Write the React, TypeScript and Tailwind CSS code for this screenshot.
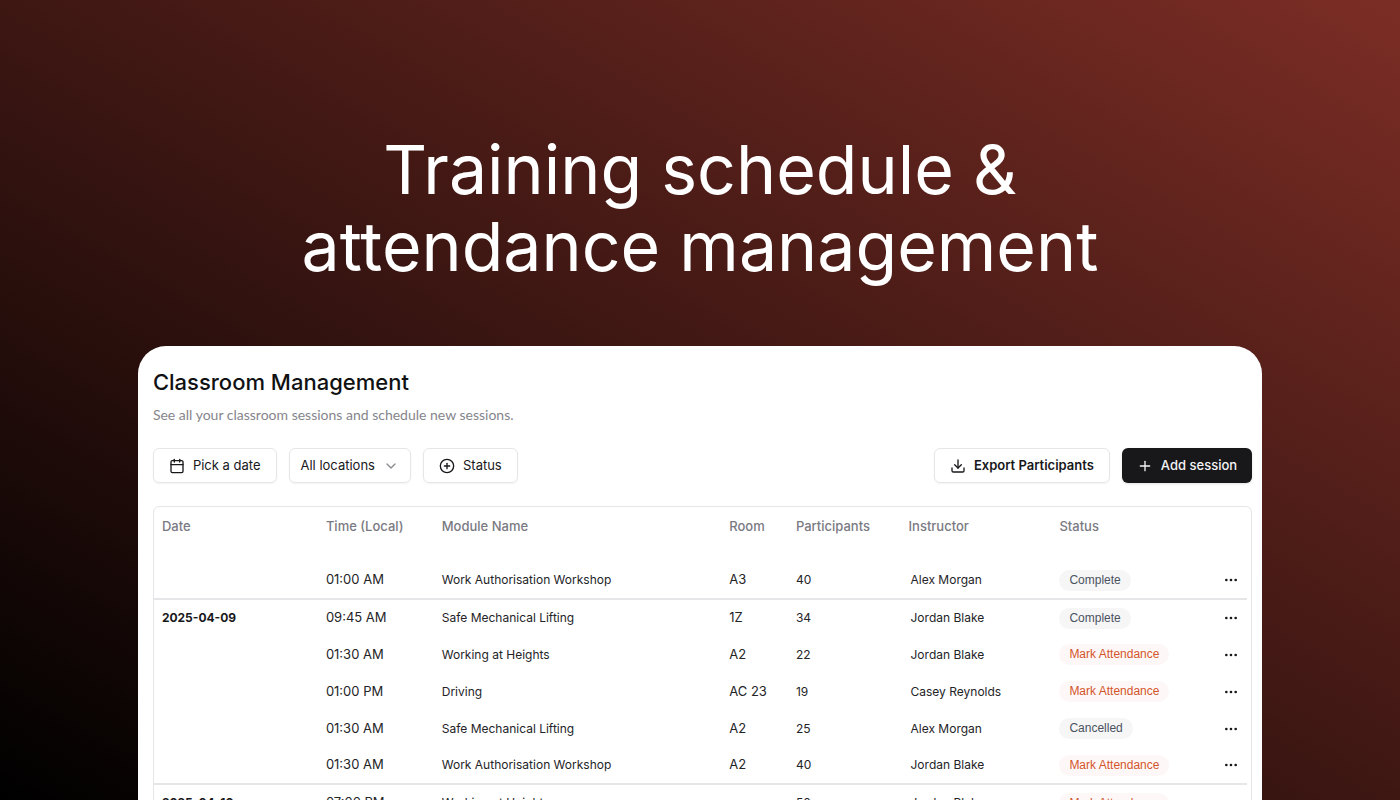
import { Calendar, ChevronDown, CirclePlus, Download, Ellipsis, Plus } from "lucide-react";

const sessions = [
  { date: "", time: "01:00 AM", module: "Work Authorisation Workshop", room: "A3", participants: 40, instructor: "Alex Morgan", status: "Complete", last: true },
  { date: "2025-04-09", time: "09:45 AM", module: "Safe Mechanical Lifting", room: "1Z", participants: 34, instructor: "Jordan Blake", status: "Complete" },
  { date: "", time: "01:30 AM", module: "Working at Heights", room: "A2", participants: 22, instructor: "Jordan Blake", status: "Mark Attendance" },
  { date: "", time: "01:00 PM", module: "Driving", room: "AC 23", participants: 19, instructor: "Casey Reynolds", status: "Mark Attendance" },
  { date: "", time: "01:30 AM", module: "Safe Mechanical Lifting", room: "A2", participants: 25, instructor: "Alex Morgan", status: "Cancelled" },
  { date: "", time: "01:30 AM", module: "Work Authorisation Workshop", room: "A2", participants: 40, instructor: "Jordan Blake", status: "Mark Attendance", last: true },
  { date: "2025-04-10", time: "07:00 PM", module: "Working at Heights", room: "", participants: 50, instructor: "Jordan Blake", status: "Mark Attendance" },
];

const StatusPill = ({ status }: { status: string }) => {
  const color = status === "Mark Attendance" ? "bg-[#fdf8f7] text-[#d4552b]" : "bg-[#f6f6f7] text-[#4b5260]";
  return (
    <span className={`inline-block rounded-full px-[10px] font-['Liberation_Sans',sans-serif] text-[12px] leading-[21px] ${color}`}>
      {status}
    </span>
  );
};

const SessionTable = () => {
  return (
    <div className="mt-[23px] rounded-md border border-[#e6e6e8] pr-1">
      <table className="w-full table-fixed border-collapse text-left text-[13px]">
        <colgroup>
          <col className="w-[15%]" />
          <col className="w-[10.6%]" />
          <col className="w-[26.3%]" />
          <col className="w-[6.1%]" />
          <col className="w-[10.3%]" />
          <col className="w-[13.8%]" />
          <col className="w-[13.9%]" />
          <col />
        </colgroup>
        <thead>
          <tr className="h-[55px] align-top text-[#7a7a82]">
            <th className="px-2 pt-[10px] font-medium">Date</th>
            <th className="px-2 pt-[10px] font-medium">Time (Local)</th>
            <th className="px-2 pt-[10px] font-medium">Module Name</th>
            <th className="px-2 pt-[10px] font-medium">Room</th>
            <th className="px-2 pt-[10px] font-medium">Participants</th>
            <th className="px-2 pt-[10px] font-medium">Instructor</th>
            <th className="px-2 pt-[10px] font-medium">Status</th>
            <th></th>
          </tr>
        </thead>
        <tbody className="text-[#242427]">
          {sessions.map((session, i) => (
            <tr key={i} className={session.last ? "h-[37px] border-b-2 border-[#e6e6e8]" : "h-[37px]"}>
              <td className="px-2 text-[12px] font-bold text-[#18181b]">{session.date}</td>
              <td className="px-2">{session.time}</td>
              <td className="px-2 text-[12px]">{session.module}</td>
              <td className="px-2">{session.room}</td>
              <td className="px-2 text-[12px]">{session.participants}</td>
              <td className="px-[10px] text-[12px]">{session.instructor}</td>
              <td className="px-2"><StatusPill status={session.status} /></td>
              <td className="pr-2 text-right">
                <button type="button" aria-label="Session actions" className="block ml-auto">
                  <Ellipsis className="size-4 text-[#18181b]" />
                </button>
              </td>
            </tr>
          ))}
        </tbody>
      </table>
    </div>
  );
};

const App = () => {
  return (
    <div className="h-screen overflow-hidden bg-linear-to-tr/srgb from-black to-[#7b2d25] font-[Inter,sans-serif]">
      <h1 className="pt-[131px] text-center text-[68px] leading-[77px] font-normal text-white">
        Training schedule &amp;
        <br />
        attendance management
      </h1>

      <main className="mx-auto mt-[61px] w-[80.3%] rounded-t-[28px] bg-white pt-5 pr-[10px] pl-[15px]">
        <h2 className="text-[22px] leading-8 font-medium text-[#111113]">Classroom Management</h2>
        <p className="mt-[7px] font-[Lato,sans-serif] text-[14px] leading-5 text-[#85858c]">See all your classroom sessions and schedule new sessions.</p>

        <div className="mt-[23px] flex items-center justify-between text-[13px] text-[#18181b]">
          <div className="flex gap-3">
            <button type="button" className="flex h-[35px] items-center gap-2 rounded-md border border-[#e6e6e8] px-[15px] shadow-xs">
              <Calendar className="size-4" />
              Pick a date
            </button>
            <button type="button" className="flex h-[35px] items-center gap-2 rounded-md border border-[#e6e6e8] px-[11px] shadow-xs">
              All locations
              <ChevronDown className="size-4 text-[#8a8a90]" />
            </button>
            <button type="button" className="flex h-[35px] items-center gap-2 rounded-md border border-[#e6e6e8] px-[15px] shadow-xs">
              <CirclePlus className="size-4" />
              Status
            </button>
          </div>
          <div className="flex gap-3">
            <button type="button" className="flex h-[35px] items-center gap-2 rounded-md border border-[#e6e6e8] px-[15px] font-semibold shadow-xs">
              <Download className="size-4" />
              Export Participants
            </button>
            <button type="button" className="flex h-[35px] items-center gap-2 rounded-md bg-[#18181b] px-[15px] font-medium text-[#f4f4f5] shadow-sm">
              <Plus className="size-4" />
              Add session
            </button>
          </div>
        </div>

        <SessionTable />
      </main>
    </div>
  );
};

export default App;
